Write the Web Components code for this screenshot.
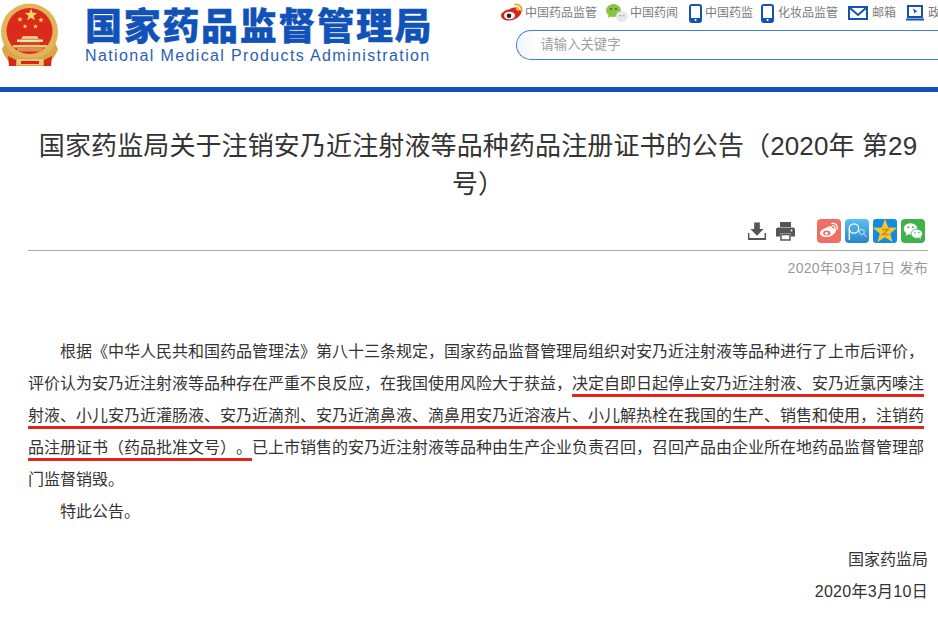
<!DOCTYPE html>
<html lang="zh"><head><meta charset="utf-8">
<style>
html,body{margin:0;padding:0;background:#fff;overflow:hidden;height:618px}
body{font-family:"Liberation Sans","Noto Sans CJK SC",sans-serif}
</style></head>
<body>
<site-header></site-header>
<article-page></article-page>
<script>
const CJK='"Liberation Sans","Noto Sans CJK SC",sans-serif';
function star(cx,cy,r,fill){let p=[];for(let i=0;i<10;i++){const a=-Math.PI/2+i*Math.PI/5,q=i%2?r*.42:r;p.push((cx+q*Math.cos(a)).toFixed(1)+','+(cy+q*Math.sin(a)).toFixed(1));}return `<polygon points="${p.join(' ')}" fill="${fill}"/>`;}
const emblem=`<svg width="60" height="66" viewBox="0 0 60 66">
<circle cx="29.5" cy="31" r="28.5" fill="#e2b45a"/>
<circle cx="29.5" cy="30" r="23" fill="#d92a1c"/>
${star(31,14,6.5,'#f6d860')}${star(20,18.5,2.8,'#f6d860')}${star(41,19,2.8,'#f6d860')}${star(25,25.5,2.6,'#f6d860')}${star(35.5,25.5,2.6,'#f6d860')}
<path d="M23 35h14l2 3H21z" fill="#eec878"/><path d="M17 38.500h26v2.500H17z" fill="#f5e3b0"/><path d="M20 41h20v3H20z" fill="#cf4a2a"/><path d="M13 44h34v2.500H13z" fill="#eccb80"/>
<path d="M17 46.500h26v4H17z" fill="#dd8f50"/>
<path d="M5 42c4 9 11 15 25 15s21-6 25-15l3 6c-3 9-9 14-14 17H15C10 62 4 57 2 48z" fill="#d9a545"/>
<path d="M8 55l8 4v6H9zM52 55l-8 4v6h7z" fill="#d5281c"/>
<path d="M17 58h26v6H17z" fill="#e9c475"/><path d="M21 60h18v3H21z" fill="#d5281c"/>
</svg>`;
class SiteHeader extends HTMLElement{constructor(){super();this.attachShadow({mode:'open'}).innerHTML=`<style>
:host{display:block;height:92px;box-sizing:border-box;border-bottom:5px solid #1052ba;position:relative;overflow:hidden}
.wrap{display:flex;height:87px}
.logo{width:85px;flex:none;padding:1px 0 0 0;box-sizing:border-box;height:70px}
.logo svg{display:block}
.brand{width:415px;flex:none;padding-top:3px}
.cn{font:900 37px/42px "Noto Sans CJK SC",sans-serif;letter-spacing:1.700px;color:#1152b8;white-space:nowrap;-webkit-text-stroke:.4px #1152b8}
.en{font:16px/18px "Liberation Sans",sans-serif;letter-spacing:1.370px;color:#2a5fb4;white-space:nowrap;margin-top:2px}
.tools{flex:1;min-width:0;padding:2px 0 0 0}
.search{margin:6px 0 0 16px;width:460px;height:30px;box-sizing:border-box;border:1px solid #3d82cc;border-right:0;border-radius:16px 0 0 16px;background:linear-gradient(90deg,#f3f5f9 0,#fff 22px);padding-left:23.5px;font:13.330px/28px ${CJK};color:#a0a0a0}
</style><div class="wrap"><div class="logo">${emblem}</div>
<div class="brand"><div class="cn">国家药品监督管理局</div><div class="en">National Medical Products Administration</div></div>
<div class="tools"><nav-bar></nav-bar><div class="search">请输入关键字</div></div></div>`;}}
customElements.define('site-header',SiteHeader);
const phone=`<svg width="13" height="19" viewBox="0 0 13 19"><rect x="1" y="1" width="11" height="17" rx="2" fill="#fff" stroke="#1452b4" stroke-width="2"/><rect x="1" y="14" width="11" height="4" fill="#1452b4"/><circle cx="6.500" cy="16" r="1.100" fill="#fff"/></svg>`;
const icons={
weibo:`<svg width="24" height="20" viewBox="0 0 24 20"><path d="M10 6c3-2 6-2 6.500-.5.300 1-.2 1.800.8 1.700 3-.9 4.500.6 4 2.300-1 4-6.500 8-12 8C4.500 17.500 1 15.500 1 12.500 1 10 5 7 10 6z" fill="#d8261d"/><ellipse cx="9.500" cy="12.500" rx="5.500" ry="3.800" fill="#fff"/><circle cx="9" cy="12.800" r="2.300" fill="#222"/><path d="M15 1.500c4-.7 7.500 2.500 6.500 7" fill="none" stroke="#f0a020" stroke-width="1.700" stroke-linecap="round"/><path d="M15.500 4.500c2-.3 3.500 1.200 3 3.200" fill="none" stroke="#f0a020" stroke-width="1.500" stroke-linecap="round"/></svg>`,
wechat:`<svg width="24" height="20" viewBox="0 0 24 20"><ellipse cx="8.500" cy="7.500" rx="7.500" ry="6.500" fill="#8bc34a"/><path d="M4 11l-1 4 4-2z" fill="#8bc34a"/><circle cx="6" cy="6" r="1" fill="#3a6a1c"/><circle cx="11" cy="6" r="1" fill="#3a6a1c"/><ellipse cx="17" cy="13.500" rx="6" ry="5.500" fill="#e9e9e9"/><circle cx="15.200" cy="12.800" r=".8" fill="#888"/><circle cx="18.800" cy="12.800" r=".8" fill="#888"/></svg>`,
phone,
mail:`<svg width="20" height="14" viewBox="0 0 20 14"><rect x="1" y="1" width="18" height="12" fill="#fff" stroke="#1452b4" stroke-width="2"/><path d="M2 2l8 7 8-7" fill="none" stroke="#1452b4" stroke-width="2"/></svg>`,
gov:`<svg width="18" height="16" viewBox="0 0 18 16"><rect x="2" y="1" width="14" height="11" fill="#fff" stroke="#1452b4" stroke-width="2"/><path d="M7 3.500l4.500 3-2 .5-.8 2z" fill="#1452b4"/><rect y="13.500" width="18" height="2" fill="#1452b4"/></svg>`};
class NavBar extends HTMLElement{constructor(){super();const it=[['weibo','中国药品监管',0,1],['wechat','中国药闻',8,1],['phone','中国药监',11,3],['phone','化妆品监管',8,4],['mail','邮箱',10,4],['gov','政务服务门户',10,4]];
this.attachShadow({mode:'open'}).innerHTML=`<style>
:host{display:flex;height:22px;align-items:center;font:12px/20px ${CJK};color:#7c7c7c;white-space:nowrap;width:460px}
div{display:flex;align-items:center;flex:none}
svg{display:block;flex:none}
</style>`+it.map(([i,t,m,g])=>`<div style="margin-left:${m}px"><span style="margin-right:${g}px">${icons[i]}</span>${t}</div>`).join('');}}
customElements.define('nav-bar',NavBar);
const shareIcon={
wb:`<svg width="24" height="24" viewBox="0 0 24 24"><rect width="24" height="24" rx="4" fill="#ef6f62"/><path d="M10 8.500c2.500-1.600 5-1.600 5.300-.3.200.8-.1 1.300.6 1.300 2.400-.7 3.600.5 3.200 1.900-.8 3.300-5.200 6.600-9.600 6.600-3.500 0-6.500-1.500-6.500-4 0-2 2.900-4.400 7-5.500z" fill="#fff"/><ellipse cx="9.800" cy="14" rx="3.700" ry="2.600" fill="#ef6f62"/><circle cx="9.500" cy="14.200" r="1.500" fill="#fff"/><path d="M15 4.500c3.500-.6 6 2 5.300 5.500" fill="none" stroke="#fff" stroke-width="1.400" stroke-linecap="round"/><path d="M15.500 6.800c1.700-.2 2.800.9 2.500 2.500" fill="none" stroke="#fff" stroke-width="1.200" stroke-linecap="round"/></svg>`,
qz:`<svg width="24" height="24" viewBox="0 0 24 24"><defs><linearGradient id="q" x1="0" y1="0" x2="0" y2="1"><stop offset="0" stop-color="#5cc0f0"/><stop offset="1" stop-color="#2a85c8"/></linearGradient></defs><rect width="24" height="24" rx="4" fill="url(#q)"/><circle cx="9" cy="9.500" r="4.700" fill="none" stroke="#fff" stroke-width="1.300"/><path d="M4.300 9.500V21" stroke="#fff" stroke-width="1.300" fill="none"/><circle cx="16.800" cy="13" r="2.500" fill="none" stroke="#c5e6f8" stroke-width="1"/><path d="M18.800 15l2.500 2.800" stroke="#c5e6f8" stroke-width="1"/></svg>`,
qq:`<svg width="24" height="24" viewBox="0 0 24 24"><rect width="24" height="24" rx="3" fill="#0f8de0"/>${star(12,12.800,13,'#f6c52d')}<path d="M9 10.500h6l-5 5h6" fill="none" stroke="#d98a10" stroke-width="1.700"/></svg>`,
wx:`<svg width="24" height="24" viewBox="0 0 24 24"><rect width="24" height="24" rx="4" fill="#3fb34a"/><ellipse cx="9.500" cy="9.800" rx="6.800" ry="5.600" fill="#fff"/><path d="M5.500 13.500l-.8 3.200 3.500-1.800z" fill="#fff"/><circle cx="7.300" cy="8.300" r="1" fill="#3fb34a"/><circle cx="11.700" cy="8.300" r="1" fill="#3fb34a"/><ellipse cx="15.800" cy="14.800" rx="5.700" ry="4.600" fill="#fff" stroke="#3fb34a" stroke-width=".8"/><circle cx="14" cy="13.800" r=".8" fill="#3fb34a"/><circle cx="17.800" cy="13.800" r=".8" fill="#3fb34a"/><path d="M18 18.500l1.800 1.800-.2-2.700z" fill="#fff"/></svg>`};
class ShareBar extends HTMLElement{constructor(){super();this.attachShadow({mode:'open'}).innerHTML=`<style>
:host{display:flex;align-items:center;justify-content:flex-end;height:24px;padding-right:3px}
svg{display:block;flex:none}
.a{margin-right:10px}.b{margin-right:22px}.s{margin-left:4px}.s:first-of-type{margin-left:0}
</style>
<svg class="a" width="18" height="20" viewBox="0 0 19 20"><path d="M6.500 1h6v7h4l-7 7-7-7h4z" fill="#555"/><path d="M0.500 12v6.500h18V12" fill="none" stroke="#555" stroke-width="2"/></svg>
<svg class="b" width="19" height="20" viewBox="0 0 19 20"><path d="M4 1h11v5H4z" fill="#555"/><path d="M2 6.500h15a2 2 0 012 2v7h-4v-3H4v3H0v-7a2 2 0 012-2z" fill="#555"/><path d="M5 13.500h9V19H5z" fill="#fff" stroke="#555" stroke-width="1.500"/><circle cx="15.500" cy="9.500" r="1" fill="#fff"/></svg>
<span class="s">${shareIcon.wb}</span><span class="s">${shareIcon.qz}</span><span class="s">${shareIcon.qq}</span><span class="s">${shareIcon.wx}</span>`;}}
customElements.define('share-bar',ShareBar);
class ArticlePage extends HTMLElement{constructor(){super();this.attachShadow({mode:'open'}).innerHTML=`<style>
:host{display:block;box-sizing:border-box;width:900px;margin-left:28px;font-family:${CJK};text-spacing-trim:space-all}
h1{margin:0;padding-top:35px;font-weight:400;font-size:26px;line-height:38px;color:#333;text-align:center;letter-spacing:.12px}
share-bar{margin-top:16px}
hr{border:0;border-top:1px solid #aaa;margin:7px 0 0}
.date{font-size:14px;line-height:20px;color:#999;text-align:right;margin-top:7px;letter-spacing:.3px}
.body{margin-top:58px;font-size:16px;line-height:32px;color:#333}
p{margin:0;text-indent:2em}
p.r{text-align:right;text-indent:0}
p.d{letter-spacing:.3px}
.gap{height:16px}
.m{text-decoration:underline #e6261c 3px;text-underline-offset:5px;text-decoration-skip-ink:none}
</style>
<h1>国家药监局关于注销安乃近注射液等品种药品注册证书的公告（2020年 第29号）</h1>
<share-bar></share-bar><hr>
<div class="date">2020年03月17日 发布</div>
<div class="body">
<p>根据《中华人民共和国药品管理法》第八十三条规定，国家药品监督管理局组织对安乃近注射液等品种进行了上市后评价，评价认为安乃近注射液等品种存在严重不良反应，在我国使用风险大于获益，<span class="m">决定自即日起停止安乃近注射液、安乃近氯丙嗪注射液、小儿安乃近灌肠液、安乃近滴剂、安乃近滴鼻液、滴鼻用安乃近溶液片、小儿解热栓在我国的生产、销售和使用，注销药品注册证书（药品批准文号）。</span>已上市销售的安乃近注射液等品种由生产企业负责召回，召回产品由企业所在地药品监督管理部门监督销毁。</p>
<p>特此公告。</p>
<div class="gap"></div>
<p class="r">国家药监局</p>
<p class="r d">2020年3月10日</p>
</div>`;}}
customElements.define('article-page',ArticlePage);
</script>
</body></html>
